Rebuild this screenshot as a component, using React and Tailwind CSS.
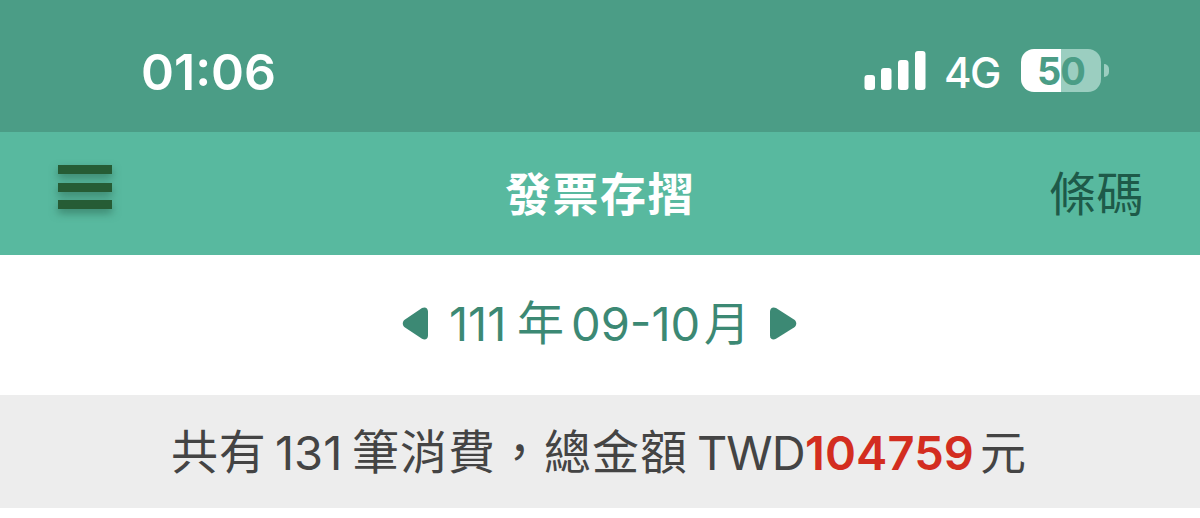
const latin = "font-['Inter','Noto_Sans_CJK_TC',sans-serif]";
const cjk = "font-['Noto_Sans_CJK_TC',sans-serif]";

function StatusBar() {
  return (
    <div className="h-[132px] bg-[#4b9d86] flex items-start text-white">
      <span className={`${latin} w-[132px] ml-[141px] mt-[42px] text-[50px] leading-[60px] font-semibold whitespace-nowrap`}>
        01<span className="inline-block -translate-y-[4px]">:</span>06
      </span>
      <svg className="ml-[591px] mt-[50px] w-[62px] h-[41px] shrink-0" viewBox="0 0 62 41" fill="currentColor">
        <rect x="0.5" y="25" width="10.5" height="15" rx="3" />
        <rect x="17" y="18" width="10.5" height="22" rx="3" />
        <rect x="34" y="10" width="10.5" height="30" rx="3" />
        <rect x="51" y="1" width="10.5" height="39" rx="3" />
      </svg>
      <span className={`${latin} w-[60px] ml-[18px] mt-[48px] text-[42px] leading-[50px] font-medium tracking-[-1.5px] whitespace-nowrap`}>4G</span>
      <div className="ml-[17px] mt-[49px] flex items-center">
        <div className={`${latin} w-[80px] h-[43px] rounded-[13px] bg-[linear-gradient(90deg,#ffffff_50.5%,#9bcec0_50.5%)] text-center text-[38px] leading-[44px] font-bold tracking-[-1px] text-[#4b9d86]`}>50</div>
        <div className="w-[5px] h-[13px] ml-[3px] rounded-r-full bg-[#9bcec0]" />
      </div>
    </div>
  );
}

function NavBar() {
  return (
    <div className="h-[123px] bg-[#58b99f] flex items-start">
      <button className="ml-[58px] mt-[33px] w-[54px] flex flex-col gap-[8.5px] drop-shadow-[0_4px_4px_rgba(30,80,60,0.5)]">
        <span className="h-[9px] w-full bg-[#265c35]" />
        <span className="h-[9px] w-full bg-[#265c35]" />
        <span className="h-[9px] w-full bg-[#265c35]" />
      </button>
      <h1 className={`${cjk} ml-[393px] mt-[29px] w-[192px] text-[46px] leading-[60px] font-bold tracking-[1.5px] text-white whitespace-nowrap`}>發票存摺</h1>
      <button className={`${cjk} ml-[352px] mt-[29px] text-[47px] leading-[60px] tracking-[0.5px] text-[#1e5a49] whitespace-nowrap`}>條碼</button>
    </div>
  );
}

function PeriodPicker() {
  return (
    <div className="h-[140px] bg-white flex items-start text-[#3c8974] text-[47px] leading-[60px] whitespace-nowrap">
      <svg className="ml-[402px] mt-[52px] w-[27px] h-[33px]" viewBox="0 0 27 33" fill="currentColor">
        <path d="M20 1C23 -0.600 26 1 26 4.500V28.500C26 32 23 33.500 20 31.800L3 20.500C0 18.500 0 14.500 3 12.500Z" />
      </svg>
      <span className={`${latin} w-[60px] ml-[20px] mt-[39px]`}>111</span>
      <span className={`${cjk} w-[46px] ml-[8px] mt-[35px]`}>年</span>
      <span className={`${latin} w-[128px] ml-[8px] mt-[39px]`}>09-10</span>
      <span className={`${cjk} w-[46px] ml-[5px] mt-[35px] text-[46px]`}>月</span>
      <svg className="ml-[19px] mt-[52px] w-[28px] h-[33px]" viewBox="0 0 28 33" fill="currentColor">
        <path d="M7 1C4 -0.600 1 1 1 4.500V28.500C1 32 4 33.500 7 31.800L25 20.500C28 18.500 28 14.500 25 12.500Z" />
      </svg>
    </div>
  );
}

function Summary() {
  return (
    <div className="h-[113px] bg-[#ededed] flex items-start text-[#444444] text-[47px] leading-[60px] whitespace-nowrap">
      <span className={`${cjk} w-[96px] ml-[171px] mt-[24px] tracking-[0.8px]`}>共有</span>
      <span className={`${latin} w-[70px] ml-[8px] mt-[28px]`}>131</span>
      <span className={`${cjk} w-[335px] ml-[7px] mt-[24px] tracking-[1px]`}>筆消費，總金額</span>
      <span className={`${latin} w-[107px] ml-[10px] mt-[28px] tracking-[-1px]`}>TWD</span>
      <span className={`${latin} w-[168px] ml-px mt-[28px] font-semibold tracking-[0.100px] text-[#d32d20]`}>104759</span>
      <span className={`${cjk} ml-[7px] mt-[24px] text-[46px]`}>元</span>
    </div>
  );
}

export default function App() {
  return (
    <div className="w-[1200px] h-[518px] bg-white overflow-hidden">
      <StatusBar />
      <NavBar />
      <PeriodPicker />
      <Summary />
    </div>
  );
}
